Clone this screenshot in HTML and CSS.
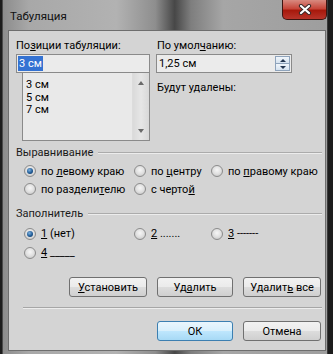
FILE: index.html
```html
<!DOCTYPE html>
<html lang="ru">
<head>
  <meta charset="UTF-8">
  <title>Табуляция</title>
  <link rel="stylesheet" href="styles.css">
</head>
<body>

  <div class="window">
    <div class="titlebar">
      <span class="title">Табуляция</span>
      <div class="close">
        <svg width="14" height="11" viewBox="0 0 14 11">
          <path d="M3 2 L11 9 M11 2 L3 9" stroke="#3a2a2a" stroke-width="4.2" stroke-linecap="round"/>
          <path d="M3 2 L11 9 M11 2 L3 9" stroke="#fff" stroke-width="2.2" stroke-linecap="round"/>
        </svg>
      </div>
    </div>

    <div class="client">
      <div class="top">
        <div class="col-left">
          <div class="lbl">По<u>з</u>иции табуляции:</div>
          <div class="field"><span class="sel">3 см</span></div>
          <div class="list">
            <ul class="list-items">
              <li>3 см</li>
              <li>5 см</li>
              <li>7 см</li>
            </ul>
            <div class="scroll">
              <span class="arrow arrow-up"></span>
              <span class="arrow arrow-down"></span>
            </div>
          </div>
        </div>

        <div class="col-right">
          <div class="lbl lbl-right">По умол<u>ч</u>анию:</div>
          <div class="field spin">
            <span>1,25 см</span>
            <span class="spin-btns">
              <span class="spin-btn"><span class="tri tri-up"></span></span>
              <span class="spin-btn"><span class="tri tri-down"></span></span>
            </span>
          </div>
          <div class="lbl lbl-right removed">Будут удалены:</div>
        </div>
      </div>

      <div class="group group-align">
        <div class="group-head">
          <span>Выравнивание</span>
          <span class="rule"></span>
        </div>
        <div class="radios">
          <label class="radio"><span class="dot checked"></span><span>по <u>л</u>евому краю</span></label>
          <label class="radio"><span class="dot"></span><span>по <u>ц</u>ентру</span></label>
          <label class="radio"><span class="dot"></span><span>по <u>п</u>равому краю</span></label>
          <label class="radio"><span class="dot"></span><span>по раздели<u>т</u>елю</span></label>
          <label class="radio"><span class="dot"></span><span>с черто<u>й</u></span></label>
        </div>
      </div>

      <div class="group group-fill">
        <div class="group-head">
          <span>Заполнитель</span>
          <span class="rule"></span>
        </div>
        <div class="radios">
          <label class="radio"><span class="dot checked"></span><span><u>1</u> (нет)</span></label>
          <label class="radio"><span class="dot"></span><span><u>2</u> .......</span></label>
          <label class="radio"><span class="dot"></span><span><u>3</u> -------</span></label>
          <label class="radio"><span class="dot"></span><span><u>4</u> _____</span></label>
        </div>
      </div>

      <div class="btn-row">
        <button class="btn btn-wide"><u>У</u>становить</button>
        <button class="btn">Уд<u>а</u>лить</button>
        <button class="btn btn-wide">Удалит<u>ь</u> все</button>
      </div>

      <div class="separator"></div>

      <div class="btn-row btn-row-bottom">
        <button class="btn btn-ok">ОК</button>
        <button class="btn btn-wide">Отмена</button>
      </div>
    </div>
  </div>

</body>
</html>
```

FILE: styles.css
```css
/* General Reset */
* {
  margin: 0;
  padding: 0;
  box-sizing: border-box;
}

body {
  background-color: #1c1c1c;
  font-family: 'Roboto', 'Noto Sans', sans-serif;
  font-size: 11px;
  color: #000;
}

u {
  text-decoration: underline;
  text-underline-offset: 1px;
}

/* Window frame */
.window {
  margin-left: 2px;
  width: 326px;
  height: 354px;
  border-left: 1px solid #4a4a4a;
  border-right: 1px solid #3a3a3a;
  background: linear-gradient(90deg, #8c8c8c 0%, #a8a8a8 8%, #b2b2b2 35%, #8e8e8e 47%, #474747 53%, #7e7e7e 58%, #a6a6a6 68%, #9e9e9e 100%);
}

.titlebar {
  height: 30px;
  display: flex;
  justify-content: space-between;
  align-items: flex-start;
}

.title {
  padding: 9px 0 0 7px;
  line-height: 14px;
  font-size: 11.5px;
  color: #111;
}

.close {
  width: 45px;
  height: 20px;
  display: flex;
  align-items: center;
  justify-content: center;
  border: 1px solid #3e1410;
  border-top: none;
  border-radius: 0 0 5px 5px;
  background: linear-gradient(180deg, #d88a80 0%, #c7463a 45%, #a8190c 55%, #b8342a 100%);
}

/* Client area */
.client {
  margin-left: 5px;
  width: 318px;
  height: 321px;
  border: 1px solid #6e6e6e;
  background-color: #d4d4d4;
  padding: 8px 3px 0 7px;
}

.lbl {
  line-height: 14px;
  height: 14px;
  white-space: nowrap;
}

.top {
  display: flex;
}

.col-left {
  width: 134px;
}

.col-right {
  width: 136px;
  margin-left: 6px;
}

.lbl-right {
  padding-left: 1px;
}

.field {
  margin-top: 1px;
  height: 19px;
  border: 1px solid #8a8a8a;
  background-color: #ebebeb;
  line-height: 17px;
  padding-left: 1px;
  white-space: nowrap;
}

.sel {
  display: inline-block;
  background-color: #3472d2;
  color: #fff;
  padding: 0 1px;
  line-height: 15px;
  margin-top: 1px;
}

/* List box */
.list {
  margin-left: 6px;
  height: 68px;
  display: flex;
  border: 1px solid #8a8a8a;
  border-top: none;
  background-color: #e9e9e9;
}

.list-items {
  flex: 1;
  list-style: none;
  padding: 6px 0 0 3px;
}

.list-items li {
  line-height: 12.5px;
}

.scroll {
  width: 17px;
  display: flex;
  flex-direction: column;
  justify-content: space-between;
  align-items: center;
  padding: 8px 0 7px;
  background: linear-gradient(90deg, #dadada, #e6e6e6 50%, #d8d8d8);
  border-left: 1px solid #dcdcdc;
}

.arrow {
  width: 0;
  height: 0;
  border-left: 3.5px solid transparent;
  border-right: 3.5px solid transparent;
}

.arrow-up {
  border-bottom: 4px solid #6a6a6a;
}

.arrow-down {
  border-top: 4px solid #6a6a6a;
}

/* Spin box */
.spin {
  display: flex;
  justify-content: space-between;
  padding-left: 2px;
}

.spin-btns {
  width: 16px;
  display: flex;
  flex-direction: column;
  padding: 1px 1px 1px 0;
}

.spin-btn {
  flex: 1;
  display: flex;
  align-items: center;
  justify-content: center;
  border: 1px solid #8ea3bb;
  background: linear-gradient(180deg, #f1f6fb, #d5e2ef);
}

.spin-btn + .spin-btn {
  border-top: none;
}

.tri {
  width: 0;
  height: 0;
  border-left: 3px solid transparent;
  border-right: 3px solid transparent;
}

.tri-up {
  border-bottom: 3px solid #243650;
}

.tri-down {
  border-top: 3px solid #243650;
}

.removed {
  margin-top: 8px;
}

/* Groups */
.group-align {
  margin-top: 5px;
}

.group-fill {
  margin-top: 9px;
}

.group-head {
  display: flex;
  align-items: center;
  line-height: 14px;
  height: 14px;
  color: #1a1a1a;
}

.rule {
  flex: 1;
  margin-left: 5px;
  border-top: 1px solid #ababab;
  border-bottom: 1px solid #ececec;
}

.radios {
  display: grid;
  grid-template-columns: 110px 77px auto;
  padding-left: 8px;
}

.group-align .radios {
  margin-top: 2px;
  grid-auto-rows: 18px;
}

.group-fill .radios {
  margin-top: 3px;
  grid-auto-rows: 19px;
}

.radio {
  display: flex;
  align-items: center;
  gap: 5px;
  white-space: pre;
}

.dot {
  width: 12px;
  height: 12px;
  flex: none;
  border-radius: 50%;
  border: 1px solid #8c8c8c;
  background: radial-gradient(circle at 50% 40%, #f6f6f6 0%, #e0e0e0 50%, #bdbdbd 100%);
  display: flex;
  align-items: center;
  justify-content: center;
}

.dot.checked::after {
  content: "";
  width: 6px;
  height: 6px;
  border-radius: 50%;
  background: radial-gradient(circle at 40% 35%, #7fb2e0 0%, #1f5b96 55%, #0e2f55 100%);
}

/* Buttons */
.btn-row {
  display: flex;
  justify-content: flex-end;
  gap: 10px;
  margin-top: 15px;
  padding-right: 1px;
}

.btn-row-bottom {
  margin-top: 12px;
}

.btn {
  width: 76px;
  height: 20px;
  border: 1px solid #707070;
  border-radius: 3px;
  background: linear-gradient(180deg, #f2f2f2 0%, #ebebeb 48%, #dcdcdc 52%, #cfcfcf 100%);
  font-family: inherit;
  font-size: 11px;
  color: #000;
  line-height: 17px;
}

.btn-wide {
  width: 78px;
}

.btn-ok {
  border-color: #3c7fb1;
  background: linear-gradient(180deg, #eaf6fd 0%, #d9f0fc 48%, #bee6fd 52%, #a7d9f5 100%);
}

.separator {
  margin: 10px 0 0 7px;
  border-top: 1px solid #a6a6a6;
  border-bottom: 1px solid #ececec;
}
```
